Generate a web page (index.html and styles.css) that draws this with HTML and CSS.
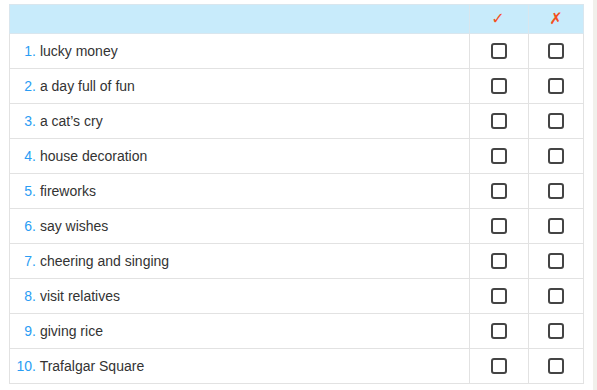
FILE: index.html
```html
<!DOCTYPE html>
<html>
<head>
<meta charset="utf-8">
<link rel="stylesheet" href="styles.css">
</head>
<body>
<div class="page">
  <div class="content">
    <table class="quiz">
      <thead>
        <tr>
          <th class="item-head"></th>
          <th class="mark-head yes"><span class="tick">✓</span></th>
          <th class="mark-head no"><span class="cross">✗</span></th>
        </tr>
      </thead>
      <tbody>
        <tr><td class="item"><span class="num">1.</span> lucky money</td><td class="box"><span class="cb"></span></td><td class="box"><span class="cb"></span></td></tr>
        <tr><td class="item"><span class="num">2.</span> a day full of fun</td><td class="box"><span class="cb"></span></td><td class="box"><span class="cb"></span></td></tr>
        <tr><td class="item"><span class="num">3.</span> a cat’s cry</td><td class="box"><span class="cb"></span></td><td class="box"><span class="cb"></span></td></tr>
        <tr><td class="item"><span class="num">4.</span> house decoration</td><td class="box"><span class="cb"></span></td><td class="box"><span class="cb"></span></td></tr>
        <tr><td class="item"><span class="num">5.</span> fireworks</td><td class="box"><span class="cb"></span></td><td class="box"><span class="cb"></span></td></tr>
        <tr><td class="item"><span class="num">6.</span> say wishes</td><td class="box"><span class="cb"></span></td><td class="box"><span class="cb"></span></td></tr>
        <tr><td class="item"><span class="num">7.</span> cheering and singing</td><td class="box"><span class="cb"></span></td><td class="box"><span class="cb"></span></td></tr>
        <tr><td class="item"><span class="num">8.</span> visit relatives</td><td class="box"><span class="cb"></span></td><td class="box"><span class="cb"></span></td></tr>
        <tr><td class="item"><span class="num">9.</span> giving rice</td><td class="box"><span class="cb"></span></td><td class="box"><span class="cb"></span></td></tr>
        <tr><td class="item"><span class="num">10.</span> Trafalgar Square</td><td class="box"><span class="cb"></span></td><td class="box"><span class="cb"></span></td></tr>
      </tbody>
    </table>
  </div>
  <div class="rail"></div>
</div>
</body>
</html>
```

FILE: styles.css
```css
html, body {
  margin: 0;
  padding: 0;
  background: #ffffff;
  font-family: "Liberation Sans", Arial, sans-serif;
}

.page {
  display: flex;
  height: 390px;
  overflow: hidden;
}

.content {
  flex: 0 0 593px;
  padding: 4px 0 0 9px;
  box-sizing: border-box;
}

.rail {
  flex: 1;
  background: #f1f0eb;
}

.quiz {
  border-collapse: collapse;
  width: 571px;
  table-layout: fixed;
}

.quiz th,
.quiz td {
  border: 1px solid #e2e2e2;
  padding: 0;
}

.quiz thead tr {
  background: #c8ebfb;
  height: 29px;
}

.quiz thead th {
  border-color: #d9e6ee;
  font-weight: normal;
}

.item-head {
  width: 459px;
}

.mark-head {
  text-align: center;
  vertical-align: middle;
  color: #f4511e;
  line-height: 16px;
}

.mark-head.yes {
  width: 58px;
}

.mark-head.no {
  width: 54px;
}

.tick,
.cross {
  font-family: "DejaVu Sans", sans-serif;
  font-size: 16px;
}

.tick {
  position: relative;
  left: -1px;
}

.quiz tbody tr {
  height: 35px;
}

.item {
  font-size: 14px;
  color: #333333;
  vertical-align: middle;
}

.num {
  display: inline-block;
  width: 26px;
  text-align: right;
  color: #2a9df4;
}

.box {
  text-align: center;
  vertical-align: middle;
}

.cb {
  display: inline-block;
  width: 12px;
  height: 12px;
  border: 2px solid #444444;
  border-radius: 3px;
  vertical-align: middle;
  position: relative;
  top: -1px;
}
```
